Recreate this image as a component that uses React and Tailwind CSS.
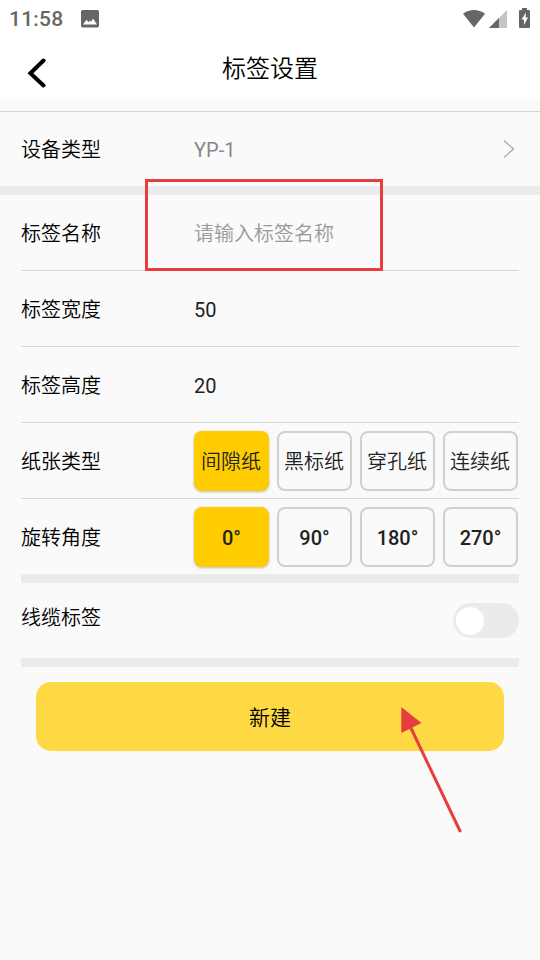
import React, { useState } from "react";

const paperTypes = ["间隙纸", "黑标纸", "穿孔纸", "连续纸"];
const angles = ["0°", "90°", "180°", "270°"];

const StatusBar = () => (
  <div className="flex h-[37px] items-center pl-[9px] text-[#666]">
    <span className="w-[72px] text-[21px] leading-[36px] font-medium tracking-[0.2px]">11:58</span>
    <svg className="h-[18px] w-[18px]" viewBox="0 0 18 18">
      <rect width="18" height="17.5" rx="1.8" fill="#666" />
      <path d="M2 14.5 5.5 9.8l2 2.4L9 10.5l1.3 1.2L12 8.5l4 6z" fill="#fff" />
    </svg>
    <svg className="ml-auto h-[18px] w-[22px]" viewBox="0 0 22 18">
      <path d="M0 3.8C6.5-1.2 15.5-1.2 22 3.8L11 17.6z" fill="#666" />
    </svg>
    <svg className="ml-[4px] h-[18px] w-[18px]" viewBox="0 0 18 18">
      <path d="M18 0v18H0z" fill="#c4c4c4" />
      <path d="M10 8v10H0z" fill="#666" />
    </svg>
    <svg className="mr-[10px] ml-[12px] mb-[2px] h-[20px] w-[11px]" viewBox="0 0 11 20">
      <path d="M3 0h5v2h2q1 0 1 1v16q0 1-1 1H1q-1 0-1-1V3q0-1 1-1h2z" fill="#666" />
      <path d="M7 4.5 2.5 11.5H5V17l4-7.5H6.5z" fill="#fff" />
    </svg>
  </div>
);

const Header = () => (
  <header className="grid h-[62px] grid-cols-[72px_1fr_72px] bg-white">
    <button className="flex items-start pt-[21px] pl-[27px]">
      <svg className="h-[30px] w-[20px]" viewBox="0 0 20 30">
        <path
          d="M16.5 2.5 3.4 15.2l13.1 12.3"
          fill="none"
          stroke="#000"
          strokeWidth="4"
          strokeLinecap="round"
        />
      </svg>
    </button>
    <h1 className="text-center text-[24px] leading-[64px] font-[350]">标签设置</h1>
  </header>
);

const Row = ({ label, size = "h-[76px] border-b border-[#d6d6d6]", children }) => (
  <div className={`mx-[21px] flex items-center ${size}`}>
    <span className="w-[173px] pt-[2px] text-[20px] font-[350] text-black">{label}</span>
    {children}
  </div>
);

const Choices = ({ items, value, onChange, weight }) => (
  <div className="flex gap-[8px]">
    {items.map((item) => (
      <button
        key={item}
        onClick={() => onChange(item)}
        className={`h-[60px] w-[75px] rounded-lg pt-[2px] text-[20px] whitespace-nowrap text-[#222] ${weight} ${
          value === item
            ? "bg-[#ffcc00] shadow-[0_1px_3px_rgba(0,0,0,0.25)]"
            : "border-2 border-[#d0d0d0]"
        }`}
      >
        {item}
      </button>
    ))}
  </div>
);

const App = () => {
  const [name, setName] = useState("");
  const [paper, setPaper] = useState(paperTypes[0]);
  const [angle, setAngle] = useState(angles[0]);
  const [cable, setCable] = useState(false);

  return (
    <div className="relative h-[960px] w-[540px] overflow-hidden bg-[#fafafa] font-[Roboto,'Noto_Sans_CJK_SC',sans-serif] text-black">
      <div className="bg-white">
        <StatusBar />
        <Header />
      </div>

      <div className="mt-[12px] border-t border-[#d6d6d6]">
        <Row label="设备类型" size="h-[74px]">
          <span className="pt-[2px] text-[20px] text-[#888]">YP-1</span>
          <svg className="mr-[4px] ml-auto h-[20px] w-[12px]" viewBox="0 0 12 20">
            <path d="M1 1.5 10.5 10 1 18.5" fill="none" stroke="#aaa" strokeWidth="1.3" />
          </svg>
        </Row>
      </div>
      <div className="h-[9px] bg-[#ebebeb]" />

      <Row label="标签名称">
        <input
          value={name}
          onChange={(e) => setName(e.target.value)}
          placeholder="请输入标签名称"
          className="w-[300px] pt-[2px] text-[20px] font-[350] outline-none placeholder:text-[#999]"
        />
      </Row>
      <Row label="标签宽度">
        <span className="pt-[2px] text-[20px] text-[#222]">50</span>
      </Row>
      <Row label="标签高度">
        <span className="pt-[2px] text-[20px] text-[#222]">20</span>
      </Row>
      <Row label="纸张类型">
        <Choices items={paperTypes} value={paper} onChange={setPaper} weight="pr-px font-[350]" />
      </Row>
      <Row label="旋转角度" size="h-[75px]">
        <Choices items={angles} value={angle} onChange={setAngle} weight="font-medium" />
      </Row>
      <div className="mx-[21px] h-[9px] bg-[#ebebeb]" />

      <div className="mx-[21px] flex h-[75px] justify-between">
        <span className="pt-[20px] text-[20px] leading-[30px] font-[350]">线缆标签</span>
        <button
          onClick={() => setCable(!cable)}
          className={`mt-[20px] flex h-[35px] w-[66px] items-center rounded-full px-[3px] ${
            cable ? "justify-end bg-[#ffcc00]" : "bg-[#ebebeb]"
          }`}
        >
          <span className="h-[28px] w-[28px] rounded-full bg-white" />
        </button>
      </div>
      <div className="mx-[21px] h-[9px] bg-[#ebebeb]" />

      <button className="mx-[36px] mt-[15px] h-[69px] w-[468px] rounded-[15px] bg-[#ffd943] pt-[5px] text-[21px] font-[350]">
        新建
      </button>

      {/* guide marks over the form */}
      <div className="pointer-events-none absolute top-[179px] left-[145px] h-[92px] w-[238px] border-3 border-[#e53e3e]" />
      <svg
        className="pointer-events-none absolute top-[700px] left-[395px] h-[140px] w-[75px]"
        viewBox="0 0 75 140"
      >
        <path d="M14 24 65.5 132" stroke="#e53e3e" strokeWidth="3" />
        <path d="M6.3 7 26.5 23 6.3 33z" fill="#e53e3e" />
      </svg>
    </div>
  );
};

export default App;
